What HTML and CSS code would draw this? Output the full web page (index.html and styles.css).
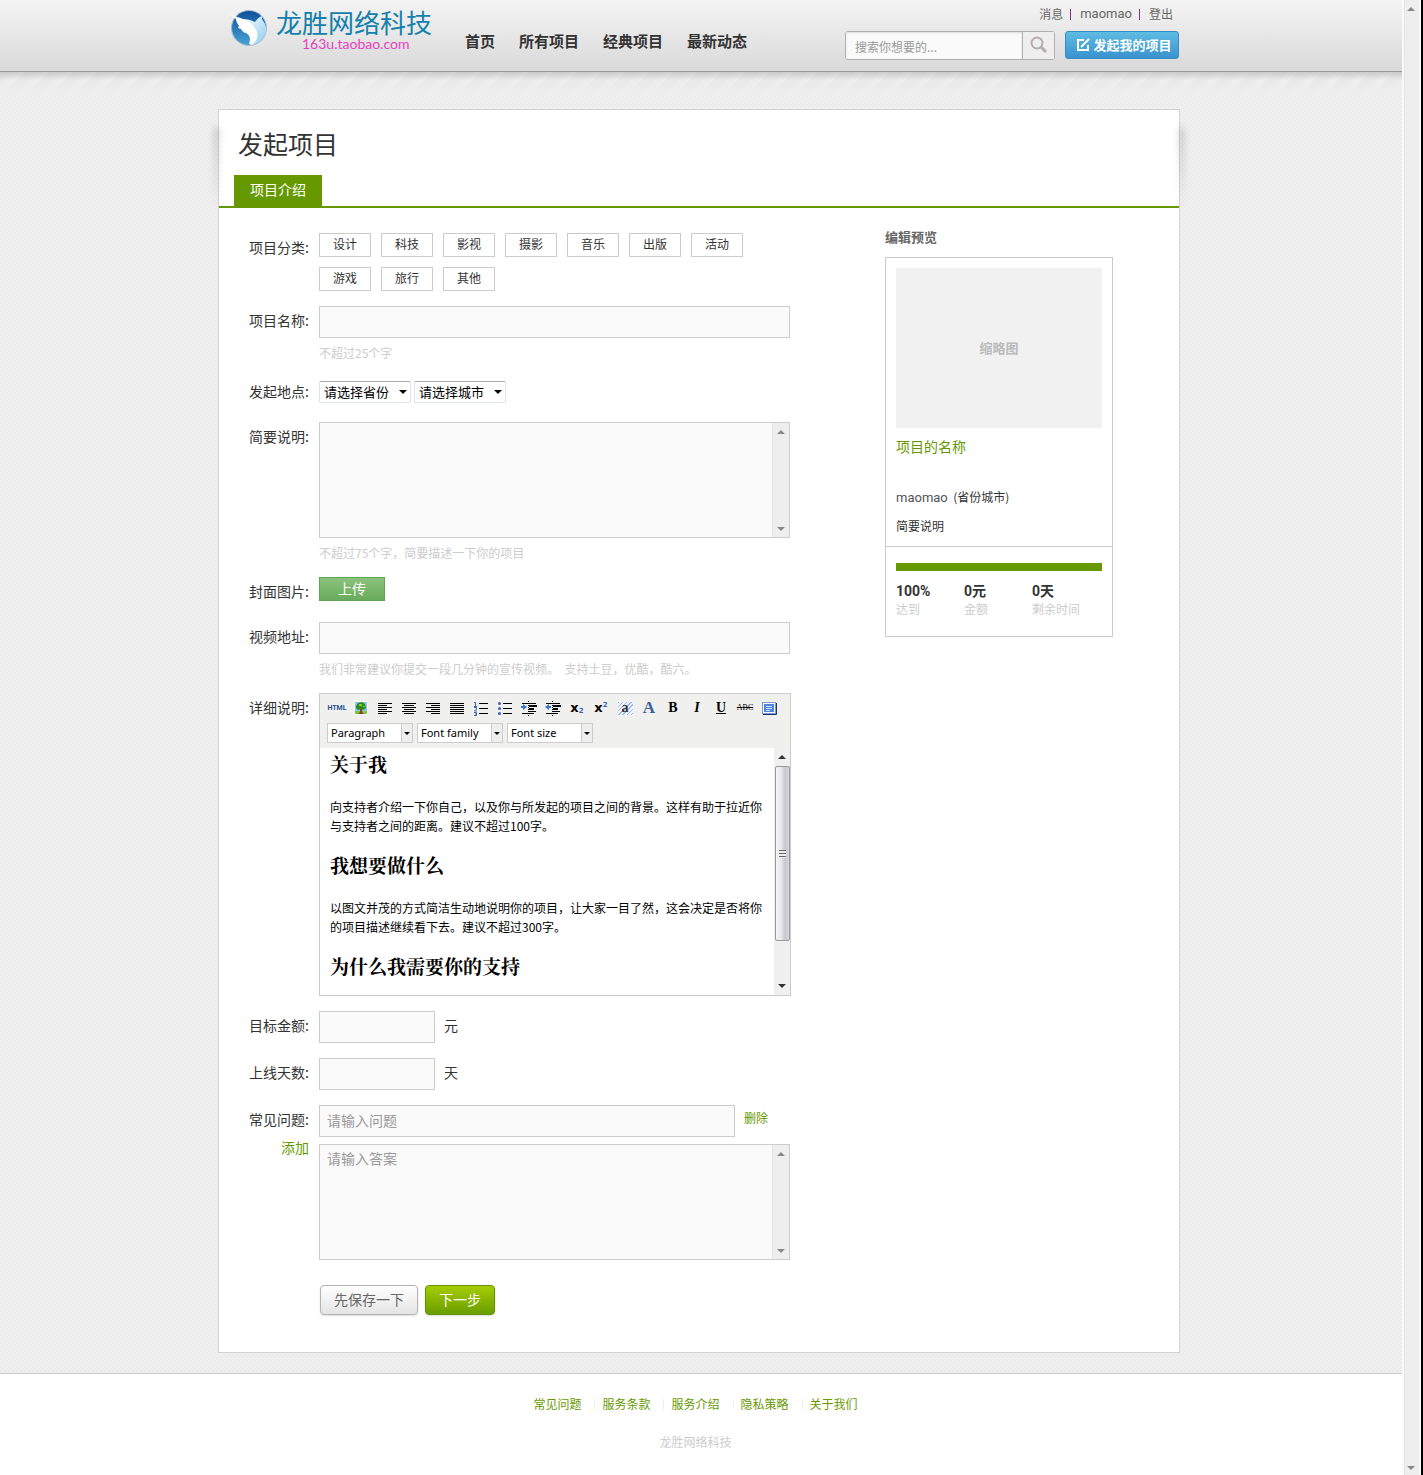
FILE: index.html
```html
<!DOCTYPE html>
<html lang="zh-CN">
<head>
<meta charset="utf-8">
<title>发起项目</title>
<link rel="stylesheet" href="styles.css">
</head>
<body>
<svg class="defs" aria-hidden="true">
  <symbol id="up" viewBox="0 0 8 4"><path d="M4 0 8 4H0z"/></symbol>
  <symbol id="down" viewBox="0 0 8 4"><path d="M0 0H8L4 4z"/></symbol>
</svg>
<div class="app">
  <header class="header">
    <div class="container header-inner">
      <a class="logo" href="#">
        <svg class="logo-mark" width="38" height="38" viewBox="0 0 38 38">
          <defs>
            <linearGradient id="sea" x1="0" y1="0" x2="0" y2="1"><stop offset="0" stop-color="#0b4f9c"/><stop offset="1" stop-color="#4aa3d6"/></linearGradient>
            <linearGradient id="fin" x1="0" y1="0" x2="1" y2="1"><stop offset="0" stop-color="#fff"/><stop offset="1" stop-color="#8ccbee"/></linearGradient>
          </defs>
          <circle cx="19" cy="18" r="17.500" fill="url(#sea)" stroke="#a9bccb"/>
          <path d="M12 9c5 0 9 1 13 3 2-3 4-5 7-6 0 3 0 4 2 6 3 5 3 10 0 15-3 4-7 7-12 8 3-5 2-9-1-13-4-5-8-7-9-13z" fill="url(#fin)"/>
          <path d="M0 4 7 7c8 2 15 6 19 13 3 6 1 11-4 15l-3-1c2-5 1-9-3-11-2 0-4-2-5-4l-3-1 1-2c-2-3-3-5-3-7z" fill="#fff"/>
        </svg>
        <span class="logo-text"><span class="logo-name">龙胜网络科技</span><span class="logo-url">163u.taobao.com</span></span>
      </a>
      <nav class="nav">
        <a href="#">首页</a><a href="#">所有项目</a><a href="#">经典项目</a><a href="#">最新动态</a>
      </nav>
      <div class="tools">
        <div class="account"><a href="#">消息</a><i></i><a class="latin" href="#">maomao</a><i></i><a href="#">登出</a></div>
        <div class="actions">
          <form class="search">
            <input type="text" placeholder="搜索你想要的..." aria-label="搜索">
            <button type="button" aria-label="搜索"><svg width="18" height="18" viewBox="0 0 18 18" fill="none" stroke="#b5acb0"><circle cx="7" cy="7" r="5.500" stroke-width="2"/><path d="m11 11 5 5" stroke-width="3"/></svg></button>
          </form>
          <button class="start" type="button"><svg width="14" height="14" viewBox="0 0 14 14" fill="none" stroke="#fff" stroke-width="2"><path d="M8 2H2v10h10V7"/><path d="m5 9 8-8"/></svg>发起我的项目</button>
        </div>
      </div>
    </div>
  </header>

  <main class="main">
    <div class="container card">
      <h1>发起项目</h1>
      <div class="tabs"><a class="tab" href="#">项目介绍</a></div>
      <div class="columns">
        <form class="form">
          <div class="row">
            <span class="label">项目分类:</span>
            <div class="field chips">
              <button type="button">设计</button><button type="button">科技</button><button type="button">影视</button><button type="button">摄影</button><button type="button">音乐</button><button type="button">出版</button><button type="button">活动</button><button type="button">游戏</button><button type="button">旅行</button><button type="button">其他</button>
            </div>
          </div>
          <div class="row">
            <label class="label" for="name">项目名称:</label>
            <div class="field"><input class="text" id="name" type="text"><p class="hint">不超过25个字</p></div>
          </div>
          <div class="row">
            <label class="label" for="province">发起地点:</label>
            <div class="field places">
              <span class="place"><select id="province"><option>请选择省份</option></select><svg><use href="#down"/></svg></span>
              <span class="place"><select id="city" aria-label="城市"><option>请选择城市</option></select><svg><use href="#down"/></svg></span>
            </div>
          </div>
          <div class="row">
            <label class="label" for="brief">简要说明:</label>
            <div class="field">
              <div class="area"><textarea id="brief"></textarea><div class="scroll"><svg><use href="#up"/></svg><svg><use href="#down"/></svg></div></div>
              <p class="hint">不超过75个字，简要描述一下你的项目</p>
            </div>
          </div>
          <div class="row">
            <span class="label">封面图片:</span>
            <div class="field line"><button class="upload" type="button">上传</button></div>
          </div>
          <div class="row">
            <label class="label" for="video">视频地址:</label>
            <div class="field"><input class="text" id="video" type="text"><p class="hint">我们非常建议你提交一段几分钟的宣传视频。&nbsp; 支持土豆，优酷，酷六。</p></div>
          </div>
          <div class="row">
            <span class="label">详细说明:</span>
            <div class="field editor">
              <div class="toolbar">
                <div class="icons">
                  <button type="button" class="t-html">HTML</button>
                  <button type="button" aria-label="图片"><svg viewBox="0 0 20 20"><path fill="#fff" d="M3 3h14v14H3z"/><path fill="#8cc4f2" d="M4 4h12v9H4z"/><path fill="#7fc241" d="M4 13h12v3H4z"/><path fill="#7a4a1c" d="M9 10h2v4l2 2H7l2-2z"/><path fill="#2f8a1e" d="M5 8l2-3 4-1 3 2 1 4-3 2-2-1-3 1-2-2z"/><path fill="#7ad03f" d="M8 6h3v2H8zM12 8h2v1h-2z"/></svg></button>
                  <button type="button" aria-label="左对齐"><svg viewBox="0 0 20 20" stroke="#000"><path d="M3 5.500h14M3 7.500h9M3 9.500h14M3 11.500h9M3 13.500h14M3 15.500h9"/></svg></button>
                  <button type="button" aria-label="居中"><svg viewBox="0 0 20 20" stroke="#000"><path d="M3 5.500h14M5 7.500h10M3 9.500h14M5 11.500h10M3 13.500h14M5 15.500h10"/></svg></button>
                  <button type="button" aria-label="右对齐"><svg viewBox="0 0 20 20" stroke="#000"><path d="M3 5.500h14M8 7.500h9M3 9.500h14M8 11.500h9M3 13.500h14M8 15.500h9"/></svg></button>
                  <button type="button" aria-label="两端对齐"><svg viewBox="0 0 20 20" stroke="#000"><path d="M3 5.500h14M3 7.500h14M3 9.500h14M3 11.500h14M3 13.500h14M3 15.500h14"/></svg></button>
                  <button type="button" aria-label="编号列表"><svg viewBox="0 0 20 20"><path stroke="#000" d="M8 5.500h9M8 10.500h9M8 15.500h9"/><path fill="none" stroke="#3a62b8" d="M3 4.500h1.500V8M3 8.500h3M3 9.500h2.500v1.500l-2 2H6M3 14.500h2.500v3H3M4 16h1.500"/></svg></button>
                  <button type="button" aria-label="项目列表"><svg viewBox="0 0 20 20"><path stroke="#000" d="M8 5.500h9M8 10.500h9M8 15.500h9"/><g fill="#3a62b8"><circle cx="4.500" cy="5.500" r="1.500"/><circle cx="4.500" cy="10.500" r="1.500"/><circle cx="4.500" cy="15.500" r="1.500"/></g></svg></button>
                  <button type="button" aria-label="增加缩进"><svg viewBox="0 0 20 20"><path stroke="#000" d="M3 5.500h14M10 13.500h7M3 15.500h12"/><path stroke="#000" stroke-width="2" d="M10 8h8M10 11h5"/><path stroke="#000" stroke-dasharray="1 1" d="M9.500 3v15"/><path fill="#3f74d1" d="M2 8h2V6l4 3-4 3v-2H2z"/></svg></button>
                  <button type="button" aria-label="减少缩进"><svg viewBox="0 0 20 20"><path stroke="#000" d="M3 5.500h14M10 13.500h7M3 15.500h12"/><path stroke="#000" stroke-width="2" d="M10 8h8M10 11h5"/><path stroke="#000" stroke-dasharray="1 1" d="M9.500 3v15"/><path fill="#3f74d1" d="M8 8H6V6L2 9l4 3v-2h2z"/></svg></button>
                  <button type="button" class="t-script">x<sub>2</sub></button>
                  <button type="button" class="t-script">x<sup>2</sup></button>
                  <button type="button" class="t-back"><span>a</span></button>
                  <button type="button" class="t-color">A</button>
                  <button type="button" class="t-bold">B</button>
                  <button type="button" class="t-italic">I</button>
                  <button type="button" class="t-under">U</button>
                  <button type="button" class="t-strike">ABC</button>
                  <button type="button" aria-label="全屏"><svg viewBox="0 0 20 20"><rect x="3.500" y="4.500" width="13" height="11" fill="#fff" stroke="#7a9ad8"/><path fill="#4f86dc" d="M5 6h10v8H5z"/><path stroke="#cfe0fa" d="M7 8.500h6M7 10.500h6M7 12.500h4"/><path stroke="#1d3567" d="M4 16.500h13.500V5" fill="none"/></svg></button>
                </div>
                <div class="lists">
                  <span class="list"><select aria-label="段落"><option>Paragraph</option></select><i><svg><use href="#down"/></svg></i></span>
                  <span class="list"><select aria-label="字体"><option>Font family</option></select><i><svg><use href="#down"/></svg></i></span>
                  <span class="list"><select aria-label="字号"><option>Font size</option></select><i><svg><use href="#down"/></svg></i></span>
                </div>
              </div>
              <div class="document">
                <div class="content">
                  <h3>关于我</h3>
                  <p>向支持者介绍一下你自己，以及你与所发起的项目之间的背景。这样有助于拉近你与支持者之间的距离。建议不超过100字。</p>
                  <h3>我想要做什么</h3>
                  <p>以图文并茂的方式简洁生动地说明你的项目，让大家一目了然，这会决定是否将你的项目描述继续看下去。建议不超过300字。</p>
                  <h3>为什么我需要你的支持</h3>
                </div>
                <div class="scroll active"><svg><use href="#up"/></svg><div class="thumb"><i></i></div><svg><use href="#down"/></svg></div>
              </div>
            </div>
          </div>
          <div class="row">
            <label class="label" for="amount">目标金额:</label>
            <div class="field inline"><input class="text short" id="amount" type="text"><span>元</span></div>
          </div>
          <div class="row">
            <label class="label" for="days">上线天数:</label>
            <div class="field inline"><input class="text short" id="days" type="text"><span>天</span></div>
          </div>
          <div class="row">
            <div class="label"><label for="question">常见问题:</label><a href="#">添加</a></div>
            <div class="field">
              <div class="inline question"><input class="text" id="question" type="text" placeholder="请输入问题"><a href="#">删除</a></div>
              <div class="area"><textarea aria-label="答案" placeholder="请输入答案"></textarea><div class="scroll"><svg><use href="#up"/></svg><svg><use href="#down"/></svg></div></div>
            </div>
          </div>
          <div class="row submit">
            <span class="label"></span>
            <div class="field"><button class="save" type="button">先保存一下</button><button class="next" type="button">下一步</button></div>
          </div>
        </form>

        <aside class="preview">
          <h2>编辑预览</h2>
          <div class="box">
            <div class="about">
              <div class="thumbnail">缩略图</div>
              <a class="project" href="#">项目的名称</a>
              <p><span class="latin">maomao</span>&nbsp; (省份城市)</p>
              <p>简要说明</p>
            </div>
            <div class="progress">
              <div class="bar"></div>
              <dl>
                <div><dt>100%</dt><dd>达到</dd></div>
                <div><dt>0元</dt><dd>金额</dd></div>
                <div><dt>0天</dt><dd>剩余时间</dd></div>
              </dl>
            </div>
          </div>
        </aside>
      </div>
    </div>
  </main>

  <footer class="footer">
    <nav><a href="#">常见问题</a><i></i><a href="#">服务条款</a><i></i><a href="#">服务介绍</a><i></i><a href="#">隐私策略</a><i></i><a href="#">关于我们</a></nav>
    <p>龙胜网络科技</p>
  </footer>
</div>
<div class="scroll page-scroll"><svg><use href="#up"/></svg><svg><use href="#down"/></svg></div>
</body>
</html>
```
FILE: styles.css
```css
* { box-sizing: border-box; }
body, h1, h2, h3, p, dl, dd { margin: 0; }
body {
  display: flex;
  min-height: 100vh;
  font: 12px/18px "Noto Sans CJK SC", sans-serif;
  color: #333;
  background: #fff;
}
a { color: #690; text-decoration: none; }
button, input, select, textarea { font: inherit; color: inherit; margin: 0; padding: 0; }
button { border: 0; background: none; white-space: nowrap; }
.defs { position: absolute; width: 0; height: 0; }
.app { flex: 1; min-width: 0; display: flex; flex-direction: column; }
.container { width: 962px; max-width: 100%; margin: 0 auto; }
.latin { font: 13px/18px Roboto, sans-serif; color: #555; }

/* header */
.header {
  height: 72px;
  padding-right: 4px;
  border-bottom: 1px solid #999;
  background: linear-gradient(#f4f4f4, #d9d9d9);
}
.header-inner { display: flex; padding: 0 1px 0 12px; }
.logo { display: flex; gap: 8px; padding-top: 10px; }
.logo-text { display: flex; flex-direction: column; color: #1480ad; }
.logo-name { font-size: 26px; line-height: 24px; font-weight: 400; }
.logo-url { padding: 2px 0 0 26px; font: 14px/16px Lato, sans-serif; color: #e63fc0; }
.nav { display: flex; gap: 24px; padding: 31px 0 0 33px; }
.nav a { font-size: 15px; line-height: 20px; font-weight: 700; color: #333; }
.tools { margin-left: auto; }
.account { display: flex; justify-content: flex-end; align-items: center; height: 28px; padding-right: 6px; }
.account a { color: #666; }
.account i { width: 1px; height: 11px; margin: 0 9px 0 7px; background: #838; }
.actions { display: flex; gap: 10px; padding-top: 3px; }
.search { display: flex; width: 210px; height: 29px; border: 1px solid #b0b0b0; border-radius: 3px; background: #fafafa; }
.search input { flex: 1; min-width: 0; padding: 2px 9px 0; border: 0; background: none; box-shadow: inset 0 1px 2px #ddd; }
.search input::placeholder { color: #999; }
.search button { width: 32px; padding-top: 3px; border-left: 1px solid #b0b0b0; background: #eee; }
.start {
  display: flex; align-items: center; justify-content: center; gap: 3px;
  width: 114px; height: 28px; padding-left: 4px;
  border: 1px solid #3a8cc4; border-radius: 3px;
  background: linear-gradient(#5fbce2, #3a92cf);
  font-size: 13px; font-weight: 700; line-height: 26px; color: #fff;
}

/* main card */
.main {
  padding: 37px 4px 20px 0;
  background:
    linear-gradient(rgba(190, 190, 190, .7), rgba(236, 236, 236, 0)) 0 0 / 100% 8px no-repeat,
    linear-gradient(rgba(237, 237, 237, .4), #eee) 0 0 / 100% 24px no-repeat,
    repeating-linear-gradient(135deg, #e3e3e3 0 8px, #eee 12px 17px) 0 0 / 100% 24px no-repeat,
    repeating-conic-gradient(#ebebeb 0 25%, #f0f0f0 0 50%) 0 0 / 4px 4px;
}
.card { position: relative; z-index: 0; padding-bottom: 37px; border: 1px solid #d2d2d2; background: #fff; }
.card::before {
  content: ""; position: absolute; z-index: -1; top: 18px; left: -5px; right: -5px; height: 80px;
  background:
    linear-gradient(rgba(0, 0, 0, .18), transparent) 0 0 / 5px 100% no-repeat,
    linear-gradient(rgba(0, 0, 0, .18), transparent) 100% 0 / 5px 100% no-repeat;
  filter: blur(3px);
}
h1 { padding: 18px 20px 17px 19px; font-size: 25px; line-height: 30px; font-weight: 400; }
.tabs { display: flex; padding-left: 15px; border-bottom: 2px solid #690; }
.tab { height: 31px; padding: 0 16px; font-size: 14px; line-height: 29px; color: #fff; background: #690; }
.columns { display: flex; justify-content: space-between; padding: 25px 66px 0 0; }

/* form */
.form { display: flex; flex-direction: column; gap: 15px; }
.row { display: flex; gap: 10px; }
.label { display: block; width: 90px; text-align: right; font-size: 14px; line-height: 28px; }
.label label, .label a { display: block; }
.field { width: 471px; }
.chips { display: flex; flex-wrap: wrap; gap: 10px; }
.chips button { width: 52px; height: 24px; padding-bottom: 2px; border: 1px solid #ccc; line-height: 20px; background: #fff; }
.text, .area { display: flex; width: 100%; border: 1px solid #ccc; background: #fafafa; }
.text { height: 32px; padding: 0 7px 2px; font-size: 14px; }
.text::placeholder, .area textarea::placeholder { color: #999; }
.area { height: 116px; }
.area textarea { flex: 1; padding: 3px 7px; border: 0; resize: none; background: none; font-size: 14px; line-height: 20px; }
.hint { padding-top: 6px; color: #ccc; }
.places { display: flex; align-items: center; gap: 3px; height: 30px; }
.place { position: relative; display: flex; }
.place select {
  width: 92px; height: 22px; padding: 0 0 2px 4px; appearance: none;
  border: 1px solid #dde2ec; border-top-color: #aaa; border-radius: 2px;
  background: #fff; font-size: 13px; line-height: 20px; color: #000;
}
.place svg { position: absolute; right: 4px; top: 9px; width: 8px; height: 4px; pointer-events: none; }
.line { height: 30px; }
.upload { display: block; width: 66px; height: 24px; padding-bottom: 2px; border: 1px solid #62a456; background: linear-gradient(#8cc27c, #68ab5b); color: #fff; font-size: 14px; line-height: 20px; }
.inline { display: flex; align-items: flex-start; gap: 9px; font-size: 14px; line-height: 28px; }
.text.short { width: 116px; }
.question { margin-bottom: 7px; }
.question .text { width: 416px; }
.question a { font-size: 12px; line-height: 26px; }
.submit { margin-top: 10px; }
.submit .field { display: flex; gap: 7px; padding-left: 1px; }
.save, .next { height: 30px; padding-bottom: 2px; border: 1px solid #b3b3b3; border-radius: 4px; font-size: 14px; line-height: 26px; box-shadow: 0 1px 2px #ddd; }
.save { width: 98px; background: linear-gradient(#fff, #e4e4e4); color: #666; }
.next { width: 70px; border-color: #5f9400; background: linear-gradient(#a6cc00, #6a9e00); color: #fff; }

/* scroll tracks */
.scroll { display: flex; flex-direction: column; justify-content: space-between; align-items: center; width: 17px; padding: 7px 0 6px; border-left: 1px solid #e2e2e2; background: #eee; }
.scroll svg { flex: none; width: 8px; height: 4px; fill: #888; }
.scroll.active { width: 16px; background: #f0f0f0; border: 0; padding: 7px 0; }
.scroll.active svg { fill: #333; }
.thumb { display: flex; align-items: center; justify-content: center; width: 15px; height: 175px; margin: 7px 0 auto; border: 1px solid #999; border-radius: 2px; background: linear-gradient(90deg, #f5f5f5, #e8e8ea 40%, #c6c6cc 70%, #d8d8dc); }
.thumb i { width: 7px; height: 8px; background: repeating-linear-gradient(#666 0 1px, #eee 1px 3px); }
.page-scroll { width: 21px; padding-right: 3px; border-left: 2px solid #f9f9f9; border-right: 2px solid #000; box-shadow: inset -2px 0 #fafafa, inset 1px 0 #e4e4e4; }

/* editor */
.editor { width: 472px; margin-right: -1px; border: 1px solid #ccc; }
.toolbar { padding: 4px 7px 5px; background: #f0f0ee; }
.icons, .lists { display: flex; gap: 4px; }
.icons { margin-bottom: 5px; }
.icons button { display: flex; align-items: center; justify-content: center; flex: none; width: 20px; height: 20px; color: #000; font-family: "Liberation Serif", serif; }
.icons svg { width: 20px; height: 20px; }
.icons .t-html { font: 700 7px/20px Roboto, sans-serif; color: #2b5297; }
.icons .t-script { font: 700 13px/20px "DejaVu Sans", sans-serif; }
.icons sub, .icons sup { font-size: 7px; line-height: 7px; color: #3a62b8; }
.icons sub { padding-top: 6px; }
.icons sup { padding-bottom: 6px; }
.t-back span { width: 15px; height: 13px; font-size: 14px; line-height: 11px; font-weight: 700; color: #333; background: repeating-linear-gradient(135deg, #9db9f0 0 1px, #eef3fd 1px 3px); }
.icons .t-color { font-size: 17px; font-weight: 700; color: #3c5f9f; }
.icons .t-bold, .icons .t-italic, .icons .t-under { font-size: 14px; font-weight: 700; }
.t-italic { font-style: italic; }
.t-under { text-decoration: underline; }
.icons .t-strike { font-size: 8px; text-decoration: line-through; }
.list { display: flex; width: 86px; height: 20px; border: 1px solid #ccc; background: #fff; }
.list select { flex: 1; min-width: 0; padding-left: 3px; appearance: none; border: 0; background: none; color: #000; font: 11px/18px "Noto Sans", sans-serif; }
.list i { display: flex; align-items: center; justify-content: center; width: 11px; border-left: 1px solid #ccc; background: #eee; pointer-events: none; }
.list svg { width: 6px; height: 3px; }
.document { display: flex; height: 247px; overflow: hidden; background: #fff; }
.content { flex: 1; padding: 4px 8px 0 10px; color: #000; }
.content h3 { margin-bottom: 21px; font: 700 19px/24px "Noto Serif CJK SC", "Noto Sans CJK SC", serif; }
.content p { margin-bottom: 18px; line-height: 19px; }

/* preview */
.preview { width: 228px; }
.preview h2 { margin: -5px 0 11px; font-size: 13px; line-height: 18px; color: #666; }
.box { border: 1px solid #ccc; }
.about { height: 289px; padding: 10px; border-bottom: 1px solid #ccc; }
.thumbnail { height: 160px; background: #f1f1f1; text-align: center; font-size: 13px; line-height: 160px; font-weight: 700; color: #bbb; }
.project { display: block; margin-bottom: 24px; font-size: 14px; line-height: 36px; }
.about p { margin-bottom: 10px; }
.progress { padding: 16px 10px 18px; }
.bar { height: 8px; margin-bottom: 11px; background: #690; }
.progress dl { display: grid; grid-template-columns: repeat(3, 68px); }
.progress dt { font: 700 14px/18px Roboto, "Noto Sans CJK SC", sans-serif; }
.progress dd { color: #ccc; }

/* footer */
.footer { flex: 1; padding: 21px 11px 24px 0; border-top: 1px solid #ccc; border-bottom: 1px solid #e6e6e6; background: #fff; text-align: center; }
.footer nav { display: flex; align-items: center; justify-content: center; margin-bottom: 20px; }
.footer i { width: 1px; height: 10px; margin: 0 7px 0 13px; background: #eee; }
.footer p { color: #ccc; }
```
